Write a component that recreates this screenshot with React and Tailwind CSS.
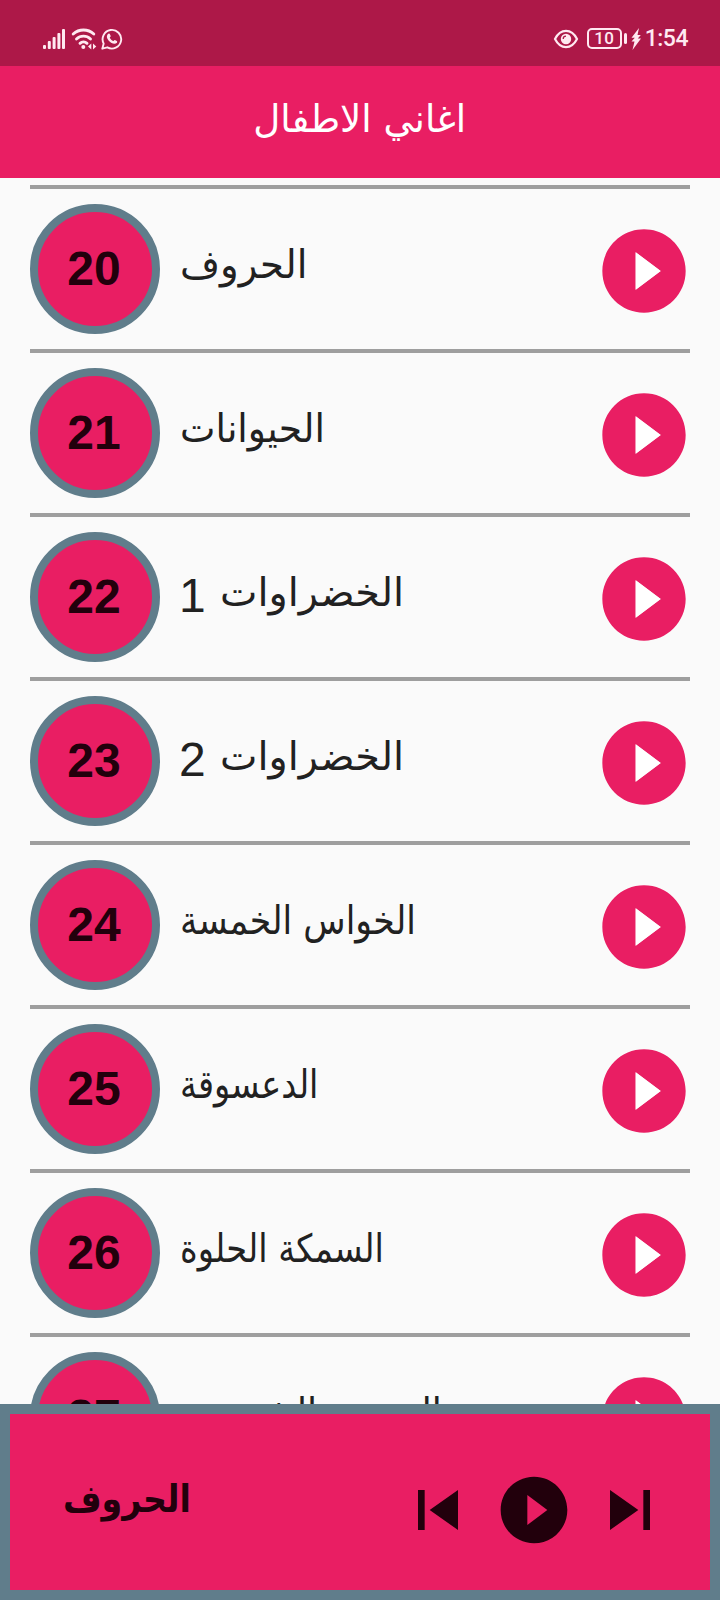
const songs = [
  { n: 20, title: "الحروف", fit: "scale-x-[0.99]" },
  { n: 21, title: "الحيوانات", fit: "scale-x-[0.965]" },
  { n: 22, title: "الخضراوات", part: 1, fit: "scale-x-[1.02]" },
  { n: 23, title: "الخضراوات", part: 2, fit: "scale-x-[1.02]" },
  { n: 24, title: "الخواس الخمسة", fit: "scale-x-[0.89]" },
  { n: 25, title: "الدعسوقة", fit: "scale-x-[0.86]" },
  { n: 26, title: "السمكة الحلوة", fit: "scale-x-[0.863]" },
  { n: 27, title: "السفينة الشمسية", fit: "scale-x-[0.93]" },
];

function Icon({ d, className, children }) {
  return (
    <svg viewBox="0 0 24 24" fill="currentColor" className={className}>
      <path d={d} />
      {children}
    </svg>
  );
}

const PLAY = "M12 2C6.48 2 2 6.48 2 12s4.48 10 10 10 10-4.48 10-10S17.52 2 12 2zM10 16.5v-9l6 4.5z";
const PREV = "M6 6h2v12H6zM9.5 12l8.5 6V6z";
const NEXT = "M6 18l8.500-6L6 6zM16 6v12h2V6z";

function StatusBar() {
  return (
    <div className="flex h-[66px] shrink-0 items-center justify-between bg-[#ad1848] pt-[11px] pr-[32px] pl-[43px] text-[#ffe9f1]">
      <div className="flex items-center">
        <svg width="22" height="22" viewBox="0 0 22 22" fill="currentColor">
          <rect x="0" y="17" width="3" height="4" rx="1" />
          <rect x="4.8" y="13" width="3" height="8" rx="1" />
          <rect x="9.6" y="9" width="3" height="12" rx="1" />
          <rect x="14.4" y="5" width="3" height="16" rx="1" />
          <rect x="19" y="1" width="3" height="20" rx="1" />
        </svg>
        <svg width="26" height="22" viewBox="0 0 26 22" className="ml-[6px]" fill="none" stroke="currentColor" strokeWidth="2.9" strokeLinecap="round">
          <path d="M2.200 6C8 .7 17 .7 22.800 6" />
          <path d="M5.500 11c4-3.800 10-3.800 14 0" />
          <path d="M9 15.300c2-1.800 5-1.800 7 0" />
          <circle cx="12.3" cy="19" r="2" fill="currentColor" stroke="none" />
          <path d="M20.300 15.500v6L17 18.500zM22 15.500v6l3.300-3z" fill="currentColor" stroke="none" />
        </svg>
        <svg width="22" height="22" viewBox="0 0 22 22" className="ml-[4px]" fill="none" stroke="currentColor" strokeWidth="1.9">
          <path d="M1.300 20.700l1.400-5.100A9.300 9.300 0 1 1 6.300 19.300z" strokeLinejoin="round" />
          <path d="M7.400 5.800c.7-.4 1.300-.2 1.500.4l.8 1.900c.1.500-.9 1.300-.9 1.700.7 1.500 1.900 2.600 3.400 3.200.5 0 1.100-1.200 1.600-1.100l2 1c.7.300.4 1.700-.2 2.200-1.300 1.200-3.500.8-5.500-.4-2.100-1.300-3.800-3.300-4.200-5.400-.2-1.400.5-2.900 1.500-3.500z" fill="currentColor" stroke="none" />
        </svg>
      </div>
      <div className="flex items-center">
        <svg width="26" height="20" viewBox="0 0 26 20" fill="none" stroke="currentColor" strokeWidth="2.2">
          <path d="M2 10C7.500-.8 18.500-.8 24 10 18.500 20.800 7.500 20.800 2 10z" />
          <circle cx="13" cy="10" r="5.2" fill="currentColor" stroke="none" />
          <path d="M10.200 10A2.800 2.800 0 0 1 13 7.200" stroke="#ad1848" strokeWidth="1.3" />
        </svg>
        <div className="ml-[8px] flex h-[21px] w-[35px] items-center justify-center rounded-[5px] border-2 border-current font-['Roboto',sans-serif] text-[17px] leading-none font-medium tracking-[0.2px]">10</div>
        <div className="ml-[2px] h-[11px] w-[3px] rounded-sm bg-current" />
        <svg width="12" height="22" viewBox="0 0 12 22" fill="currentColor" className="ml-[3px]">
          <path d="M9 0L1.500 9.800h3.300L1.500 13.500h3L2.500 22l8.500-11.500H7.800L10.800 7H7.500z" />
        </svg>
        <div className="ml-[3px] font-['Roboto',sans-serif] text-[23px] leading-none font-medium tracking-[-0.5px]">1:54</div>
      </div>
    </div>
  );
}

function SongRow({ song }) {
  return (
    <div className="flex h-[164px] shrink-0 items-center border-t-4 border-[#9e9e9e]">
      <div className="-mt-px flex size-[130px] items-center justify-center rounded-full border-8 border-[#607d8b] bg-[#e91e63] pr-[2px] font-['Liberation_Sans',Arial,sans-serif] text-[48px] leading-none font-bold text-[#22000c]">
        {song.n}
      </div>
      <div dir="rtl" className="ml-[20px] flex items-center whitespace-nowrap text-[#212121]">
        <span className={`mb-[9px] origin-left font-['DejaVu_Sans',sans-serif] text-[39px] leading-[48px] ${song.fit}`}>{song.title}</span>
        {song.part && (
          <span dir="ltr" className="mb-[2px] ml-[-1px] w-[41px] text-left font-['Liberation_Sans',Arial,sans-serif] text-[48px] leading-[48px]">{song.part}</span>
        )}
      </div>
      <Icon d={PLAY} className="mt-[3px] -mr-[4px] ml-auto size-[100px] text-[#e91e63]">
        <path d="M10 16.5v-9l6 4.5z" fill="#ffffff" />
      </Icon>
    </div>
  );
}

export default function App() {
  return (
    <div className="flex h-[1600px] w-[720px] flex-col overflow-hidden bg-[#fafafa]">
      <StatusBar />
      <header className="flex h-[112px] shrink-0 items-center justify-center bg-[#e91e63]">
        <h1 dir="rtl" className="mb-[7px] scale-x-[0.98] font-['DejaVu_Sans',sans-serif] text-[38px] leading-none text-white">اغاني الاطفال</h1>
      </header>
      <main className="flex min-h-0 flex-1 flex-col overflow-hidden px-[30px] pt-[7px]">
        {songs.map((s) => (
          <SongRow key={s.n} song={s} />
        ))}
      </main>
      <footer className="flex h-[196px] shrink-0 items-center border-10 border-[#607d8b] bg-[#e91e63] pr-[40px] pl-[53px] text-[#22000c]">
        <div dir="rtl" className="mb-[7px] origin-left scale-x-[0.875] font-['DejaVu_Sans',sans-serif] text-[38px] leading-none font-bold">الحروف</div>
        <div className="mt-[16px] ml-auto flex gap-4">
          <Icon d={PREV} className="size-20" />
          <Icon d={PLAY} className="size-20" />
          <Icon d={NEXT} className="size-20" />
        </div>
      </footer>
    </div>
  );
}
